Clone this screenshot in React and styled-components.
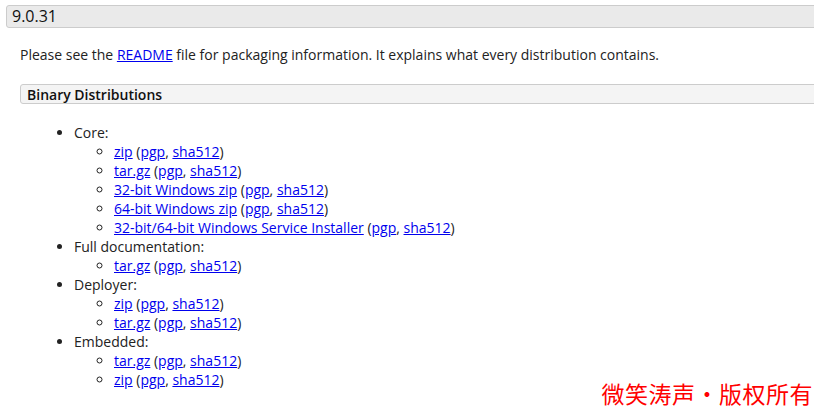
import React from "react";
import styled, { createGlobalStyle } from "styled-components";

const Global = createGlobalStyle`
  html, body { margin: 0; padding: 0; background: #fff; overflow: hidden; }
  body { font-family: "Open Sans", "Liberation Sans", sans-serif; color: #222; }
`;

const Page = styled.div`
  position: relative;
  width: 814px;
  height: 407px;
  overflow: hidden;
  padding: 5px 0 0 6px;
  box-sizing: border-box;
`;

const VersionBar = styled.h3`
  margin: 0;
  width: 840px;
  height: 23px;
  box-sizing: border-box;
  border: 1px solid #cccccc;
  border-radius: 3px;
  background: #eaeaea;
  padding-left: 5px;
  font-size: 16px;
  font-weight: 400;
  line-height: 21px;
  color: #111;
`;

const Section = styled.div`
  margin-left: 14px;
`;

const Para = styled.p`
  margin: 17px 0 0;
  font-size: 14px;
  line-height: 19px;
`;

const SubBar = styled.h4`
  margin: 20px 0 0;
  width: 820px;
  height: 20px;
  box-sizing: border-box;
  border: 1px solid #cccccc;
  border-radius: 3px;
  background: #f4f4f4;
  padding-left: 6px;
  font-size: 14px;
  font-weight: 600;
  line-height: 19px;
  color: #111;
`;

const List = styled.ul`
  margin: ${(p) => (p.$nested ? "0" : "19px 0 0")};
  padding-left: ${(p) => (p.$nested ? "40px" : "54px")};
  list-style: ${(p) => (p.$nested ? "circle" : "disc")};
  font-size: 14px;
  line-height: 19px;
`;

const Link = styled.a`
  color: #0000ee;
  text-decoration: underline;
`;

const Watermark = styled.div`
  position: absolute;
  right: 1px;
  bottom: 0;
  font-family: "Noto Sans CJK SC", sans-serif;
  font-size: 23px;
  line-height: 28px;
  color: #ff0000;
  letter-spacing: 0.5px;
  white-space: nowrap;
`;

const Files = ({ name }) => (
  <li>
    <Link href="#">{name}</Link> (<Link href="#">pgp</Link>, <Link href="#">sha512</Link>)
  </li>
);

const groups = [
  { title: "Core:", files: ["zip", "tar.gz", "32-bit Windows zip", "64-bit Windows zip", "32-bit/64-bit Windows Service Installer"] },
  { title: "Full documentation:", files: ["tar.gz"] },
  { title: "Deployer:", files: ["zip", "tar.gz"] },
  { title: "Embedded:", files: ["tar.gz", "zip"] },
];

export default function App() {
  return (
    <>
      <Global />
      <Page>
        <VersionBar>9.0.31</VersionBar>
        <Section>
          <Para>
            Please see the <Link href="#">README</Link> file for packaging information. It explains what every distribution contains.
          </Para>
          <SubBar>Binary Distributions</SubBar>
          <List>
            {groups.map((g) => (
              <li key={g.title}>
                {g.title}
                <List $nested>
                  {g.files.map((f) => (
                    <Files key={f} name={f} />
                  ))}
                </List>
              </li>
            ))}
          </List>
        </Section>
        <Watermark>微笑涛声・版权所有</Watermark>
      </Page>
    </>
  );
}
